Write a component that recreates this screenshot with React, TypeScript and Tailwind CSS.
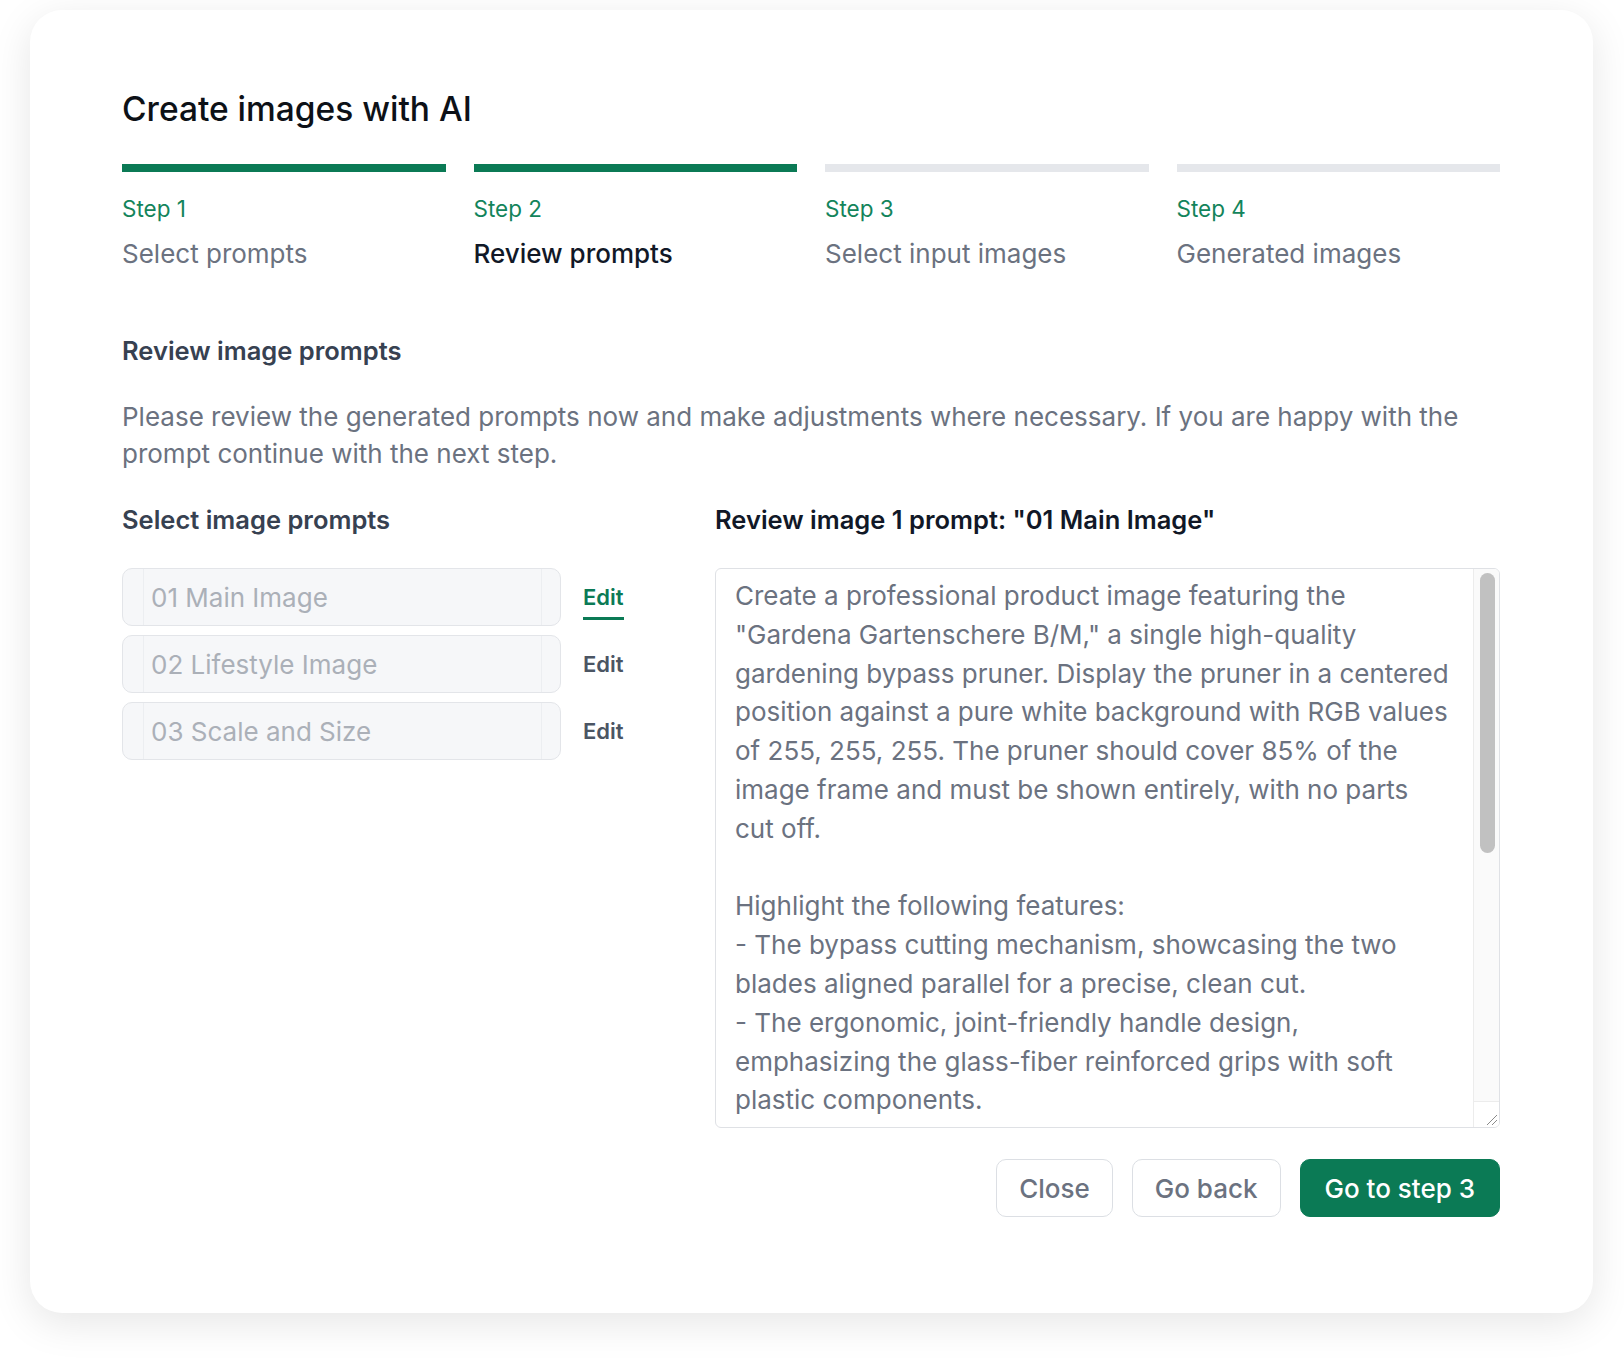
import { useState } from "react";

const steps = [
  { label: "Step 1", name: "Select prompts", done: true, active: false },
  { label: "Step 2", name: "Review prompts", done: true, active: true },
  { label: "Step 3", name: "Select input images", done: false, active: false },
  { label: "Step 4", name: "Generated images", done: false, active: false },
];

const prompts = ["01 Main Image", "02 Lifestyle Image", "03 Scale and Size"];

const promptLines = [
  "Create a professional product image featuring the",
  "\"Gardena Gartenschere B/M,\" a single high-quality",
  "gardening bypass pruner. Display the pruner in a centered",
  "position against a pure white background with RGB values",
  "of 255, 255, 255. The pruner should cover 85% of the",
  "image frame and must be shown entirely, with no parts",
  "cut off.",
  "",
  "Highlight the following features:",
  "- The bypass cutting mechanism, showcasing the two",
  "blades aligned parallel for a precise, clean cut.",
  "- The ergonomic, joint-friendly handle design,",
  "emphasizing the glass-fiber reinforced grips with soft",
  "plastic components.",
];

function App() {
  const [selected, setSelected] = useState(0);

  return (
    <div className="min-h-screen bg-white pt-[10px] pl-[30px] font-['Inter',sans-serif]">
      <div className="w-[1563px] h-[1303px] rounded-[32px] bg-white shadow-[0_10px_40px_rgba(0,0,0,0.10)] pt-[79px] pl-[92px] pr-[93px]">
        <h1 className="text-[33.5px] leading-[40px] font-medium text-[#0d1117]">
          Create images with AI
        </h1>

        <div className="mt-[35px] grid grid-cols-4 gap-x-[28px]">
          {steps.map((s) => (
            <div key={s.label}>
              <div
                className={
                  s.done ? "h-[8px] bg-[#0b7a55]" : "h-[8px] bg-[#e5e7eb]"
                }
              />
              <div className="mt-[20px] text-[22.5px] leading-[33px] text-[#13845b]">
                {s.label}
              </div>
              <div
                className={
                  s.active
                    ? "mt-[9px] text-[26px] leading-[39px] font-medium text-[#111827]"
                    : "mt-[9px] text-[26px] leading-[39px] text-[#6b7280]"
                }
              >
                {s.name}
              </div>
            </div>
          ))}
        </div>

        <h2 className="mt-[60px] text-[25.5px] leading-[36px] font-semibold text-[#374151]">
          Review image prompts
        </h2>
        <p className="mt-[29px] text-[26px] leading-[37px] text-[#6b7280]">
          Please review the generated prompts now and make adjustments where
          necessary. If you are happy with the prompt continue with the next
          step.
        </p>

        <div className="mt-[30px] flex gap-[28px]">
          <div className="w-[565px]">
            <h3 className="text-[25.5px] leading-[36px] font-semibold text-[#374151]">
              Select image prompts
            </h3>
            <div className="mt-[30px] flex flex-col gap-[9px]">
              {prompts.map((p, i) => (
                <div key={p} className="flex items-start gap-[22px]">
                  <div className="w-[439px] h-[58px] rounded-[10px] border border-[#e3e5e9] bg-[#f6f7f9] flex pl-[20px] pr-[18px]">
                    <div className="flex-1 flex items-center border-x border-[#eceef1] pl-[7px] text-[26px] text-[#abb0b8]">
                      {p}
                    </div>
                  </div>
                  <button
                    onClick={() => setSelected(i)}
                    className="pt-[14px] flex flex-col"
                  >
                    <span
                      className={
                        selected === i
                          ? "text-[22px] leading-[30px] font-semibold text-[#0b7a55]"
                          : "text-[22px] leading-[30px] font-semibold text-[#4b5563]"
                      }
                    >
                      Edit
                    </span>
                    <span
                      className={
                        selected === i
                          ? "mt-[5px] h-[3px] bg-[#0b7a55]"
                          : "mt-[5px] h-[3px] bg-transparent"
                      }
                    />
                  </button>
                </div>
              ))}
            </div>
          </div>

          <div className="flex-1">
            <h3 className="text-[25.5px] leading-[36px] font-semibold text-[#111827]">
              Review image 1 prompt: "01 Main Image"
            </h3>
            <div className="mt-[30px] h-[560px] flex rounded-[6px] border border-[#dfe1e5] overflow-hidden">
              <div className="flex-1 overflow-hidden pt-[8px] pl-[19px] text-[26px] leading-[38.8px] text-[#6b7280]">
                {promptLines.map((line, i) => (
                  <div key={i} className="whitespace-nowrap">
                    {line || "\u00a0"}
                  </div>
                ))}
              </div>
              <div className="w-[26px] border-l border-[#ececec] bg-[#fafafa] flex flex-col">
                <div className="flex-1 pt-[4px] pl-[6px] pr-[4px]">
                  <div className="h-[280px] rounded-full bg-[#c1c1c1]" />
                </div>
                <div className="h-[26px] border-t border-[#ececec] bg-white flex items-end justify-end">
                  <svg width="13" height="13" viewBox="0 0 13 13" className="mb-[1px] mr-[1px]">
                    <path d="M12 2 L2 12" stroke="#8a8a8a" strokeWidth="1" />
                    <path d="M12 7 L7 12" stroke="#8a8a8a" strokeWidth="1" />
                  </svg>
                </div>
              </div>
            </div>

            <div className="mt-[31px] flex justify-end gap-[19px]">
              <button className="h-[58px] px-[22px] rounded-[10px] border border-[#dcdfe4] bg-white text-[26px] font-medium text-[#6b7280]">
                Close
              </button>
              <button className="h-[58px] px-[22px] rounded-[10px] border border-[#dcdfe4] bg-white text-[26px] font-medium text-[#6b7280]">
                Go back
              </button>
              <button className="h-[58px] px-[24px] rounded-[10px] border border-[#0b7a55] bg-[#0b7a55] text-[26px] font-medium text-white">
                Go to step 3
              </button>
            </div>
          </div>
        </div>
      </div>
    </div>
  );
}

export default App;
